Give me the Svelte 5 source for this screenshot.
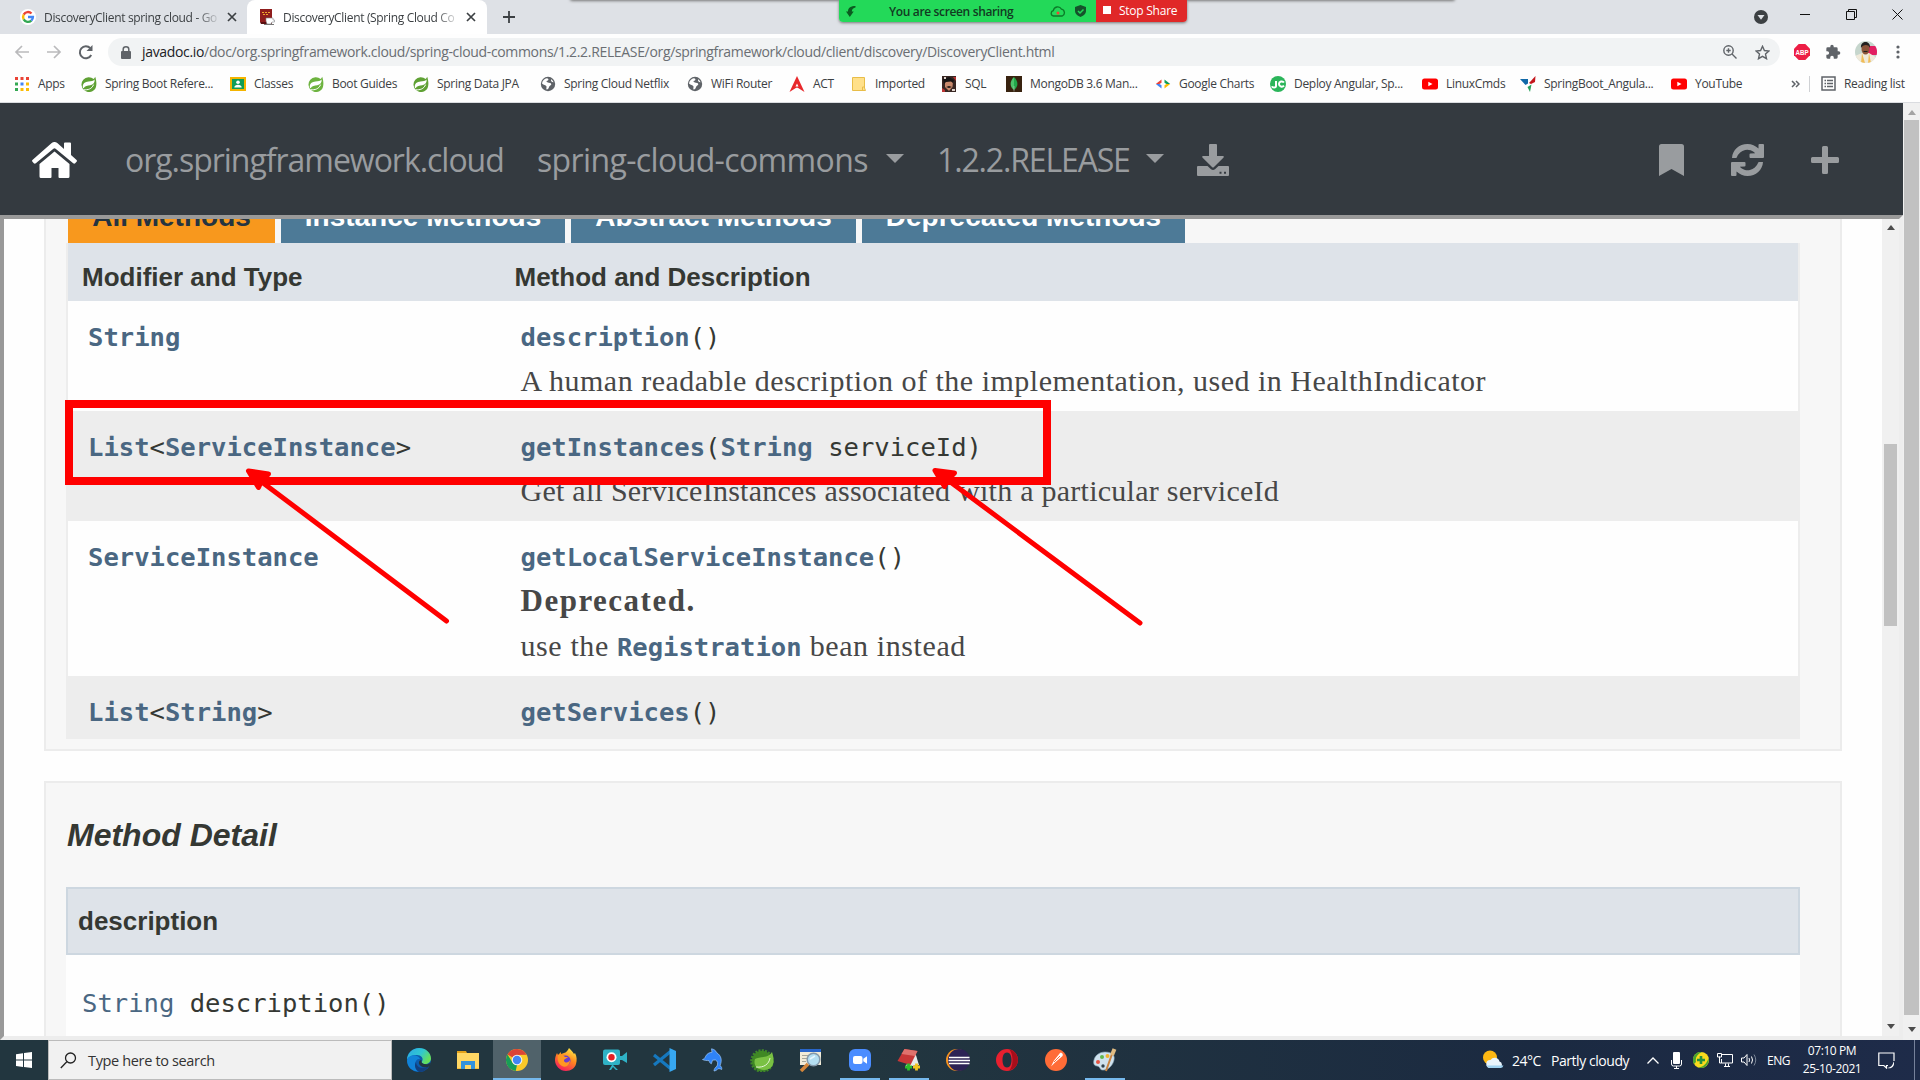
<script>
  // Each bookmark occupies the distance up to the next one's icon.
  const bookmarks = [
    { icon: 'apps', label: 'Apps', width: 67 },
    { icon: 'spring', label: 'Spring Boot Refere...', width: 149 },
    { icon: 'classes', label: 'Classes', width: 78 },
    { icon: 'springlight', label: 'Boot Guides', width: 105 },
    { icon: 'spring', label: 'Spring Data JPA', width: 127 },
    { icon: 'globe', label: 'Spring Cloud Netflix', width: 147 },
    { icon: 'globe', label: 'WiFi Router', width: 102 },
    { icon: 'act', label: 'ACT', width: 62 },
    { icon: 'folder', label: 'Imported', width: 90 },
    { icon: 'sql', label: 'SQL', width: 65 },
    { icon: 'mongo', label: 'MongoDB 3.6 Man...', width: 149 },
    { icon: 'charts', label: 'Google Charts', width: 115 },
    { icon: 'jc', label: 'Deploy Angular, Sp...', width: 152 },
    { icon: 'youtube', label: 'LinuxCmds', width: 98 },
    { icon: 'vee', label: 'SpringBoot_Angula...', width: 151 },
    { icon: 'youtube', label: 'YouTube', width: 116 }
  ];

  const tabs = [
    { label: 'All Methods', width: 207, active: true },
    { label: 'Instance Methods', width: 284 },
    { label: 'Abstract Methods', width: 285 },
    { label: 'Deprecated Methods', width: 323 }
  ];

  const taskApps = [
    { icon: 'edge' },
    { icon: 'explorer' },
    { icon: 'chrome', active: true },
    { icon: 'firefox' },
    { icon: 'camera' },
    { icon: 'vscode' },
    { icon: 'dolphin' },
    { icon: 'sts' },
    { icon: 'finder' },
    { icon: 'zoom', running: true },
    { icon: 'notes', running: true },
    { icon: 'eclipse' },
    { icon: 'opera' },
    { icon: 'postman' },
    { icon: 'paint', running: true }
  ];
</script>

{#snippet bookmarkIcon(name)}
  <svg class="fav" viewBox="0 0 16 16">
    {#if name === 'apps'}
      <path fill="#ea4335" d="M1 1h3v3H1zM6.500 1h3v3h-3zM12 1h3v3h-3z" />
      <path fill="#34a853" d="M1 6.500h3v3H1zM1 12h3v3H1z" />
      <path fill="#4285f4" d="M6.500 6.500h3v3h-3z" />
      <path fill="#fbbc05" d="M12 6.500h3v3h-3zM6.500 12h3v3h-3zM12 12h3v3h-3z" />
    {:else if name === 'spring' || name === 'springlight'}
      <path fill={name === 'spring' ? '#5fa134' : '#6db33f'} d="M14.200.7c-.4 1-.9 1.700-1.500 2.300A7.300 7.300 0 1 0 3 14.100l.3.200A7.300 7.300 0 0 0 15.300 9c.3-2.200-.1-5.100-1.100-8.300z" />
      <path fill="#fff" d="M13.600 3.500c.4 3-1.200 5.200-4.300 5.800C6.500 9.800 4 9.900 2.600 12.200l-.7-.4C1.200 7.500 4.200 5.900 7.500 5.600c2.800-.3 4.700-.6 6.100-2.100z" />
      <path fill="none" stroke="#fff" stroke-width="1" d="M2.800 13.800c4 .2 8-.6 9.800-5.200" />
    {:else if name === 'classes'}
      <path fill="#f4b400" d="M0 1h16v14H0z" />
      <path fill="#0f9d58" d="M2 3h12v10H2z" />
      <circle cx="8" cy="6.300" r="1.800" fill="#fff" />
      <path fill="#fff" d="M4.300 11.500c0-3.600 7.400-3.600 7.400 0z" />
    {:else if name === 'globe'}
      <circle cx="8" cy="8" r="7.200" fill="#5f6368" />
      <path fill="#fff" d="M7 2.300c2 .3 1.800 2.200.4 2.500-1.600.2-1 1.300.5 1.600 1.200.3 3.300.1 3.400 1.800 0 1.300-2 1.300-2.300 2.900-.2 1.400-1.500 2.600-2.300 2.300-.9-.5.2-2.200-.3-3.200C5.700 9 3.700 9.300 2 7.600c.3-3 2.500-5 5-5.300zM11 3.300c1.200.6 2.100 1.700 2.500 3-1.300.2-2.900-.9-2.500-3z" />
    {:else if name === 'act'}
      <path fill="#e8282b" d="M8 0l7.500 16-6.800-4.300h-1.500L.5 16z" />
      <path fill="#fff" d="M8 7.500l1.500 3h-3z" />
    {:else if name === 'folder'}
      <path fill="#ffe08a" stroke="#e8bd48" d="M1.500 1.500h12v10.500l1 2.500h-13z" />
      <path fill="none" stroke="#e8bd48" d="M11.500 14v-3h2" />
    {:else if name === 'sql'}
      <path fill="#382723" d="M1 0h14v16H1z" />
      <path fill="#c98a6d" d="M4 4l4-1 4 2-.5 6L8 15l-4-4z" />
      <path fill="#171414" d="M2 3l6-2 5 3-1 3-2-1.500L5 6 3 8zM5 11l3-1 3 1-3 1z" />
      <path fill="#b33" d="M1 12l3 2v2H1zM12 1h3v4z" />
      <path fill="#e0d4cd" d="M3 1h2v2H3zM11 13h3v2h-3z" />
    {:else if name === 'mongo'}
      <path fill="#38220f" d="M0 0h16v16H0z" />
      <path fill="#21a84a" d="M8 1c5 5 4 10 0 13z" />
      <path fill="#4cc36b" d="M8 1c-5 5-4 10 0 13z" />
      <path stroke="#b9c8b8" stroke-width=".6" d="M8 10v5.500" />
    {:else if name === 'charts'}
      <path fill="#ea4335" d="M6.500 3.500v3.200L4.500 8H.8z" />
      <path fill="#4285f4" d="M.8 8h3.700l2 1.300v3.200z" />
      <path fill="#0f9d58" d="M9.500 3.500L15.200 8h-3.700l-2-1.300z" />
      <path fill="#fbbc05" d="M11.500 8h3.700l-5.700 4.500V9.300z" />
    {:else if name === 'jc'}
      <circle cx="8" cy="8" r="8" fill="#2bb55a" />
      <path fill="none" stroke="#fff" stroke-width="2" d="M6 5v5c0 2-3.500 2-4 .3M14 6.500c-1.500-2-5-1-5 1.600s3.500 3.400 5 1.600" />
    {:else if name === 'youtube'}
      <rect y="2.500" width="16" height="11" rx="2.500" fill="#f00" />
      <path fill="#fff" d="M6.300 5.700v4.600L10.500 8z" />
    {:else if name === 'vee'}
      <path fill="#1169a8" d="M0 3h8v4.500L5.500 9z" />
      <path fill="#c4161c" d="M9 7l6.500-7-.5 6-4 2z" />
      <path fill="#27a05a" d="M7.500 11l4-2.500L10 16z" />
    {/if}
  </svg>
{/snippet}

{#snippet appIcon(name)}
  <svg class="app-icon" viewBox="0 0 24 24">
    {#if name === 'edge'}
      <defs>
        <linearGradient id="edgeTop" x1="0" x2="1" y2=".5"><stop stop-color="#2ba7e6" /><stop offset=".6" stop-color="#31c8d0" /><stop offset="1" stop-color="#65e05c" /></linearGradient>
      </defs>
      <circle cx="12" cy="12" r="12" fill="#0c5cad" />
      <path fill="url(#edgeTop)" d="M0 12C0 5 5.500 0 12 0c7 0 12 5 12 10.500 0 3.500-3 5.500-6 5.500-2 0-4-1-3-2.500C17 10 14 7 10 7 5 7 1 9 0 12z" />
      <path fill="#1183d8" d="M0 12c2-6 11-6 13-1-5-1-7 7-1 12.500C5 23.500 0 19 0 12z" />
      <path fill="#123f7d" d="M9 14c0 5 6 8 13 4-3 5-7 6-10 6-4-2-5-7-3-10z" />
      <path fill="#22363f" d="M14.700 12.500c-1 2 1 3.700 4.300 3.700 2 0 3.500-.6 5-2-.2 1.600-.7 2.900-1.400 4C18 21 11 18 12 14c.4-1.400 1.500-2 2.700-1.500z" />
    {:else if name === 'explorer'}
      <path fill="#e3a21a" d="M1 3h9l1 2H1z" />
      <path fill="#ffd764" d="M1 5h22v16H1z" />
      <path fill="#3192dd" d="M5 13h14v8h-4v-4H9v4H5z" />
      <path fill="#f5bb3c" d="M1 20h4v1H1zM19 20h4v1h-4z" />
    {:else if name === 'chrome'}
      <circle cx="12" cy="12" r="11" fill="#fbc928" />
      <path fill="#dc4437" d="M12 12L2.500 6.500A11 11 0 0 1 21.600 6.700L12 7z" />
      <path fill="#189d58" d="M2.500 6.500l5.100 8.200L12 17l-1.300 6A11 11 0 0 1 2.500 6.500z" />
      <circle cx="12" cy="12" r="5.300" fill="#f1f1f1" />
      <circle cx="12" cy="12" r="4.200" fill="#4285f4" />
    {:else if name === 'firefox'}
      <defs>
        <linearGradient id="fox" x1=".8" y1="0" x2=".3" y2="1"><stop stop-color="#fff04a" /><stop offset=".45" stop-color="#ff8a1e" /><stop offset="1" stop-color="#f5195f" /></linearGradient>
      </defs>
      <path fill="url(#fox)" d="M15 0c3 3 4 4 5 6l1-1c2 4 2 7 1 11-1 4-5 7-10 7C6 23 1 18 1 12c0-3 1-5 2-7l1 2 3-3v2l3-1c2 0 4-3 5-5z" />
      <circle cx="11.500" cy="12.500" r="5" fill="#6b3ccf" />
      <path fill="#ff9722" d="M4 7c2-1 5-1 7 2h3c-1 2-4 1-4 4 2 3 5 1 6-1 0 5-4 8-8 6-4-2-5-7-4-11z" />
    {:else if name === 'camera'}
      <rect y="1.500" width="17" height="15.500" rx="2" fill="#2fb2c6" />
      <path fill="#2fb2c6" d="M16 8h3l5-4v11l-5-3h-3zM10 17l5 5h-2l-3-3-2 3H6l3-5z" />
      <circle cx="8.500" cy="9.200" r="5" fill="#fff" />
      <circle cx="8.500" cy="9.200" r="3.200" fill="#e42025" />
    {:else if name === 'vscode'}
      <path fill="none" stroke="#1678be" stroke-width="3.200" stroke-linejoin="round" d="M18.500 3.500L2 17M2 7l16.500 13.500" />
      <path fill="#37a7f1" d="M17.500 0L24 3v18l-6.500 3z" />
    {:else if name === 'dolphin'}
      <path fill="#2f83f7" stroke="#9cc7f5" stroke-width=".7" stroke-linejoin="round" d="M1.500 11.500c1.500-.5 2.500-1.500 3-3C6 5.500 8.500 4.500 11 4.300L10.500.8c2.500.4 4.300 1.800 5.300 4C20 7.500 21.500 12 19 17.500c1.500 1 2 2.500 1.700 4-1.500-.8-2.500-1-3.700-.7-1 1.200-2.300 2-4 2.200.2-2 1-3.500 3-4.800 1.200-3 .7-5.200-1.500-6.200-1 0-2 0-3 .2l-1.200 3.600c-1.300-.6-2-1.700-2.300-3.300-2.300.2-4.500 0-6.500-1z" />
    {:else if name === 'sts'}
      <circle cx="12" cy="13" r="10.300" fill="#408824" stroke="#3f8928" stroke-width="3" stroke-dasharray="2 1.200" />
      <path fill="#79c143" d="M22 4c4 12 0 18-8 18-7 0-11-5-9-11 4-3 13 0 17-7z" />
      <path fill="none" stroke="#e6f5d9" d="M6 19c8 1 13-3 14-9" />
    {:else if name === 'finder'}
      <path fill="#f1ebd7" d="M1 1h21v16H1z" />
      <path fill="#2966ca" d="M1 1h21v3H1z" />
      <path stroke="#a6a79b" d="M3 7.500h8M3 10.500h5M3 13.500h4" />
      <circle cx="14.500" cy="11.500" r="6.300" fill="#b4dff2" stroke="#8599aa" stroke-width="1.500" />
      <path stroke="#e8f8ff" stroke-width="1.500" d="M11 11l5-3" />
      <path stroke="#d4863a" stroke-width="3.500" d="M9 16l-7 7" />
    {:else if name === 'zoom'}
      <rect x="1" y="1" width="22" height="22" rx="6" fill="#4a8cff" />
      <rect x="5" y="8" width="9.500" height="8" rx="2" fill="#fff" />
      <path fill="#fff" d="M15.300 10.700L19 8.200v7.600l-3.700-2.500z" />
    {:else if name === 'notes'}
      <path fill="#e7e9ea" d="M18 4l4 13-14 2z" />
      <path fill="#c83737" d="M7.500 1l13 2-7 14L.5 13z" />
      <path fill="#e0726d" d="M7.500 1l13 2-2.500 5L4.500 6z" />
      <path stroke="#2dbb2d" stroke-width="2.800" d="M8 19h7M11.500 15.500v7" />
      <path stroke="#f2c41f" stroke-width="2.800" d="M16 19h7M19.500 15.500v7" />
    {:else if name === 'eclipse'}
      <circle cx="11" cy="12" r="11" fill="#f7941e" />
      <circle cx="13" cy="12" r="11" fill="#2c2255" />
      <path stroke="#fff" stroke-width="1.600" d="M3 9.500h20.500M2.500 12.500h21.500M3 15.500h20.500" />
    {:else if name === 'opera'}
      <path fill="#e8202f" fill-rule="evenodd" d="M12 1a11 11 0 1 0 0 22 11 11 0 1 0 0-22zm0 3.500c3 0 4.500 3 4.500 7.500s-1.500 7.500-4.500 7.500S7.500 16.500 7.500 12 9 4.500 12 4.500z" />
      <path fill="#a70e1b" d="M14 1.200A11 11 0 0 1 14 22.800c2-2 3.500-6 3.500-10.800S16 3 14 1.200z" />
    {:else if name === 'postman'}
      <circle cx="12" cy="12" r="11" fill="#ff6c37" />
      <path fill="#fff" d="M16 5c2-1 4 2 2 3.500l-7 6-4 4 3-6z" />
      <path stroke="#ff6c37" d="M10 14l6-6" />
    {:else if name === 'paint'}
      <path fill="#cfe2ee" stroke="#8ca9bb" stroke-width=".6" d="M12 4c8 0 10 4 9 8-1 5-6 11-12 10-2 0-2-4-5-4C1 18 0 15 1 12c1-5 6-8 11-8z" />
      <circle cx="5" cy="14" r="2" fill="#e55443" />
      <circle cx="9" cy="9" r="2" fill="#60b74e" />
      <circle cx="14.500" cy="8" r="2" fill="#f1b22f" />
      <circle cx="10" cy="18" r="1.700" fill="#30424c" />
      <path stroke="#c98443" stroke-width="2" d="M19 6l-6 17" />
      <path stroke="#e0bb82" stroke-width="4" d="M21.500 1L19 7" />
    {/if}
  </svg>
{/snippet}

<div class="screen">
  <header class="tabstrip">
    <div class="tab idle">
      <svg class="fav" viewBox="0 0 16 16">
        <circle cx="8" cy="8" r="8" fill="#fff" />
        <g fill="none" stroke-width="2.400">
          <path stroke="#ea4335" d="M3.700 5.600A4.900 4.900 0 0 1 11.500 4.500" />
          <path stroke="#fbbc05" d="M3.700 5.600a5 5 0 0 0 0 4.800" />
          <path stroke="#34a853" d="M3.700 10.400a4.900 4.900 0 0 0 7.600 1.200" />
          <path stroke="#4285f4" d="M11.300 11.600A4.800 4.800 0 0 0 12.900 8H8" />
        </g>
      </svg>
      <span class="tab-title">DiscoveryClient spring cloud - Go</span>
      <svg class="tab-x" viewBox="0 0 10 10"><path d="M1 1l8 8M9 1L1 9" /></svg>
    </div>
    <div class="tab current">
      <svg class="fav" viewBox="0 0 16 16">
        <path fill="#8f1d1d" d="M1 0h12v13H1z" />
        <path fill="#5a0f10" d="M1 13h12v2H2z" />
        <path stroke="#efa72c" d="M3 3.500h8M4 5.500h6" stroke-dasharray="2 1" />
        <path fill="#fff" stroke="#85888c" stroke-width=".6" d="M7 9h7v2h1.500v2H13l-1 2H8l-1-3z" />
        <path stroke="#777" d="M5 15.500h10" />
      </svg>
      <span class="tab-title">DiscoveryClient (Spring Cloud Co</span>
      <svg class="tab-x" viewBox="0 0 10 10"><path d="M1 1l8 8M9 1L1 9" /></svg>
    </div>
    <svg class="newtab" viewBox="0 0 12 12"><path d="M6 0v12M0 6h12" /></svg>
    <div class="window-controls">
      <svg width="14" height="14" viewBox="0 0 14 14" class="media"><circle cx="7" cy="7" r="7" fill="#3c4043" /><path fill="#dee1e6" d="M3.500 5h7L7 9.800z" /></svg>
      <svg width="10" height="10" viewBox="0 0 10 10"><path d="M0 5.500h10" /></svg>
      <svg width="11" height="11" viewBox="0 0 11 11"><path d="M.5 2.500h8v8h-8zM2.500 2.500v-2h8v8h-2" /></svg>
      <svg class="close" width="11" height="11" viewBox="0 0 11 11"><path d="M.5.5l10 10M10.500.5l-10 10" /></svg>
    </div>
    <div class="hidden-bar"></div>
    <div class="sharing">
      <div class="share-status">
        <svg width="10" height="11" viewBox="0 0 10 11"><path fill="#0b5b20" d="M9.500 0C5 0 2 1.500 2 5.500H0L3.800 11l3.900-5.500H5.800C5.800 3 7.500 2 9.500 1.500z" /></svg>
        <b>You are screen sharing</b>
        <svg class="cloud" width="16" height="11" viewBox="0 0 16 11"><path fill="none" stroke="#0b7a28" stroke-width="1.300" d="M3.500 10A2.700 2.700 0 0 1 3.300 4.700 4.400 4.400 0 0 1 11.500 3.200 3.600 3.600 0 0 1 12.300 10z" /><circle cx="8" cy="7" r="1.500" fill="#f04438" /></svg>
        <svg width="11" height="12" viewBox="0 0 11 12"><path fill="#15522b" d="M5.500 0L11 2v4c0 3-3 5-5.500 6C3 11 0 9 0 6V2z" /><path fill="none" stroke="#23d959" stroke-width="1.500" d="M3 6l2 2 3.500-3.500" /></svg>
      </div>
      <div class="share-stop"><i></i><span>Stop Share</span></div>
    </div>
  </header>

  <div class="toolbar">
    <svg class="nav-icon dim" viewBox="0 0 16 16"><path d="M15 8H2M8 2L2 8l6 6" /></svg>
    <svg class="nav-icon dim" viewBox="0 0 16 16"><path d="M1 8h13M8 2l6 6-6 6" /></svg>
    <svg class="nav-icon" viewBox="0 0 16 16"><path d="M13.200 11A6 6 0 1 1 12.300 4.200" /><path class="solid" d="M14.500 1v6H8.500z" /></svg>
    <div class="omnibox">
      <svg width="10" height="13" viewBox="0 0 10 13"><rect y="5" width="10" height="8" rx="1" fill="#5f6368" /><path fill="none" stroke="#5f6368" stroke-width="1.500" d="M2.200 5V3.300a2.800 2.500 0 0 1 5.600 0V5" /></svg>
      <span class="url"><em>javadoc.io</em>/doc/org.springframework.cloud/spring-cloud-commons/1.2.2.RELEASE/org/springframework/cloud/client/discovery/DiscoveryClient.html</span>
      <svg class="magnify" width="14" height="14" viewBox="0 0 14 14"><g fill="none" stroke="#5f6368" stroke-width="1.400"><circle cx="5.500" cy="5.500" r="4.700" /><path d="M9 9l4.500 4.500M3.300 5.500h4.400M5.500 3.300v4.400" /></g></svg>
      <svg width="15" height="15" viewBox="0 0 15 15"><path fill="none" stroke="#5f6368" stroke-width="1.400" d="M7.500 1.300l1.900 4.200 4.500.5-3.400 3.100 1 4.600-4-2.400-4 2.400 1-4.600L1.100 6l4.500-.5z" /></svg>
    </div>
    <div class="extensions">
      <svg class="abp" width="16" height="16" viewBox="0 0 16 16"><path fill="#ed1e45" d="M4.700 0h6.600L16 4.700v6.600L11.300 16H4.700L0 11.300V4.700z" /><text x="8" y="10.700" textLength="13" lengthAdjust="spacingAndGlyphs">ABP</text></svg>
      <svg width="16" height="16" viewBox="0 0 24 24"><path fill="#5f6368" d="M20.500 11H19V7a2 2 0 0 0-2-2h-4V3.500a2.500 2.500 0 0 0-5 0V5H4a2 2 0 0 0-2 2v3.800h1.500a2.700 2.700 0 0 1 0 5.400H2V20a2 2 0 0 0 2 2h3.800v-1.500a2.700 2.700 0 0 1 5.400 0V22H17a2 2 0 0 0 2-2v-4h1.500a2.500 2.500 0 0 0 0-5z" /></svg>
      <svg class="avatar" viewBox="0 0 22 22"><path fill="#c6d6cd" d="M0 0h22v22H0z" /><path fill="#e21f62" d="M13 5h9v9h-9z" /><path fill="#f0eadb" d="M0 15l7-3h7l8 5v5H0z" /><path fill="#f1bd58" d="M7 12l3 10H6zM14 12l2 10h-3z" /><ellipse cx="10.500" cy="8" rx="4" ry="5.500" fill="#8b5438" /><path fill="#22201f" d="M6 7c-1-8 10-8 9 0-1-4-7-4-9 0zM8.500 10h4v1h-4z" /></svg>
      <svg class="more" width="4" height="14" viewBox="0 0 4 14"><g fill="#5f6368"><circle cx="2" cy="2" r="1.600" /><circle cx="2" cy="7" r="1.600" /><circle cx="2" cy="12" r="1.600" /></g></svg>
    </div>
  </div>

  <nav class="bookmarks">
    {#each bookmarks as item}
      <div class="bookmark" style:width="{item.width}px">
        {@render bookmarkIcon(item.icon)}
        <span>{item.label}</span>
      </div>
    {/each}
    <div class="reading">
      <svg width="9" height="8" viewBox="0 0 9 8"><path fill="none" stroke="#5f6368" stroke-width="1.500" d="M1 1l3 3-3 3M5 1l3 3-3 3" /></svg>
      <i></i>
      <svg width="15" height="15" viewBox="0 0 15 15"><path fill="none" stroke="#5f6368" stroke-width="1.500" d="M1 1h13v13H1zM3.500 4.500H5M6 4.500h6M3.500 7.500H5M6 7.500h6M3.500 10.500H5M6 10.500h6" /></svg>
      <span>Reading list</span>
    </div>
  </nav>

  <main class="page">
    <div class="content">
      <div class="navbar">
        <svg class="home" viewBox="0 0 45 36"><path fill="#fff" d="M22.500 0c1 0 2 .4 2.800 1.100L32 7V1.500Q32 .5 33 .5h5q1 0 1 1V13l5.300 4.800q1.200 1 .2 2l-1.300 1.400q-1 .9-2 0L23.600 6.700q-1.100-1-2.200 0L3.800 21.200q-1 .9-2 0L.5 19.800q-1-1.100.2-2L19.700 1.100A4 4 0 0 1 22.500 0z" /><path fill="#fff" d="M22.500 9.500L37.500 22v12.500q0 1.500-1.500 1.500h-8.500q-1 0-1-1v-9h-7v9q0 1-1 1H9q-1.500 0-1.500-1.500V22z" /></svg>
        <span class="crumb group">org.springframework.cloud</span>
        <span class="crumb artifact">spring-cloud-commons</span>
        <svg class="caret" viewBox="0 0 18 9"><path d="M0 0h18L9 9z" /></svg>
        <span class="crumb release">1.2.2.RELEASE</span>
        <svg class="caret" viewBox="0 0 18 9"><path d="M0 0h18L9 9z" /></svg>
        <svg class="nav-glyph download" width="32" height="32" viewBox="0 0 32 32"><path d="M13 0h6q1 0 1 1v11h6q1.500.4.600 1.500L17 23q-1 1-2 0L5.400 13.500Q4.500 12.400 6 12h6V1q0-1 1-1z" /><path fill-rule="evenodd" d="M1 22h9.500l3.500 3.300q2 1.600 4 0l3.500-3.300H31q1 0 1 1v8q0 1-1 1H1q-1 0-1-1v-8q0-1 1-1zm21.500 5.800v2h2v-2zm4.500 0v2h2v-2z" /></svg>
        <div class="nav-actions">
          <svg class="nav-glyph" width="25" height="32" viewBox="0 0 25 32"><path d="M2.500 0h20Q25 0 25 2.500V32l-12.500-7L0 32V2.500Q0 0 2.500 0z" /></svg>
          <svg class="nav-glyph" width="33" height="32" viewBox="0 0 33 32"><path d="M1 14C1.500 6 8 0 16.500 0c4.300 0 8 1.800 11 4.500V1q0-1 1-1H32q1 0 1 1v12q0 1-1 1H19.500q-1 0-1-1v-2.500q0-1 1-1l4.800-.2A11 11 0 0 0 6 13q-.3 1-1 1zM32 18c-.5 8-7 14-15.500 14-4.300 0-8-1.800-11-4.500V31q0 1-1 1H1q-1 0-1-1V19q0-1 1-1h12.500q1 0 1 1v2.500q0 1-1 1l-4.800.2A11 11 0 0 0 27 19q.3-1 1-1z" /></svg>
          <svg class="nav-glyph" width="28" height="28" viewBox="0 0 28 28"><path d="M12.500 0h3q1.500 0 1.500 1.500V11h9.500q1.500 0 1.500 1.500v3q0 1.500-1.500 1.500H17v9.500q0 1.500-1.500 1.500h-3q-1.500 0-1.500-1.500V17H1.500Q0 17 0 15.500v-3Q0 11 1.500 11H11V1.500Q11 0 12.500 0z" /></svg>
        </div>
      </div>

      <div class="frame">
        <div class="doc">
          <section class="panel summary">
            <div class="method-tabs">
              {#each tabs as tab}
                <div class="method-tab" class:selected={tab.active} style:width="{tab.width}px">{tab.label}</div>
              {/each}
            </div>
            <div class="methods">
              <div class="method-row head"><div>Modifier and Type</div><div>Method and Description</div></div>
              <div class="method-row">
                <div><code><b>String</b></code></div>
                <div>
                  <code><b>description</b>()</code>
                  <p class="human">A human readable description of the implementation, used in HealthIndicator</p>
                </div>
              </div>
              <div class="method-row alt">
                <div><code><b>List</b>&lt;<b>ServiceInstance</b>&gt;</code></div>
                <div>
                  <code><b>getInstances</b>(<b>String</b> serviceId)</code>
                  <p>Get all ServiceInstances associated with a particular serviceId</p>
                </div>
              </div>
              <div class="method-row tall">
                <div><code><b>ServiceInstance</b></code></div>
                <div>
                  <code><b>getLocalServiceInstance</b>()</code>
                  <p class="deprecated">Deprecated.</p>
                  <p class="advice">use the <code><b>Registration</b></code> bean instead</p>
                </div>
              </div>
              <div class="method-row alt last">
                <div><code><b>List</b>&lt;<b>String</b>&gt;</code></div>
                <div><code><b>getServices</b>()</code></div>
              </div>
            </div>
          </section>
          <section class="panel detail">
            <h3>Method Detail</h3>
            <h4>description</h4>
            <div class="signature"><code><span>String</span> description()</code></div>
          </section>
        </div>
        <div class="scroll inner">
          <svg viewBox="0 0 8 5"><path d="M0 5h8L4 0z" /></svg>
          <i></i>
          <svg class="down" viewBox="0 0 8 5"><path d="M0 0h8L4 5z" /></svg>
        </div>
      </div>
    </div>
    <div class="scroll outer">
      <svg class="faint" viewBox="0 0 8 5"><path d="M0 5h8L4 0z" /></svg>
      <i></i>
      <svg viewBox="0 0 8 5"><path d="M0 0h8L4 5z" /></svg>
    </div>
  </main>

  <footer class="taskbar">
    <div class="start"><svg width="16" height="16" viewBox="0 0 16 16"><path fill="#fff" d="M0 2.200L7 1.200v6.400H0zM8 1l8-1v7.600H8zM0 8.500h7v6.400l-7-1zM8 8.500h8V16l-8-1z" /></svg></div>
    <div class="search">
      <svg width="17" height="17" viewBox="0 0 17 17"><g fill="none" stroke="#222" stroke-width="1.300"><circle cx="10.500" cy="6" r="5" /><path d="M6.800 9.700L.8 16" /></g></svg>
      <span>Type here to search</span>
    </div>
    <div class="apps">
      {#each taskApps as app}
        <div class="app" class:active={app.active} class:running={app.running}>{@render appIcon(app.icon)}</div>
      {/each}
    </div>
    <div class="tray">
      <svg class="weather" width="22" height="20" viewBox="0 0 22 20"><circle cx="8" cy="7.500" r="7" fill="#fdb813" /><path fill="#e9f4fc" d="M8 18a4 4 0 0 1 .5-8 5 5 0 0 1 9 1.500A3.500 3.500 0 0 1 18 18z" /><path fill="#9fd2f0" d="M8 18a4 4 0 0 1-3.500-2.500h17A3.500 3.500 0 0 1 18 18z" /></svg>
      <span class="temp">24°C</span>
      <span class="sky">Partly cloudy</span>
      <svg class="chev" width="12" height="7" viewBox="0 0 12 7"><path fill="none" stroke="#fff" stroke-width="1.300" d="M.5 6.500L6 1l5.500 5.500" /></svg>
      <svg class="mic" width="11" height="17" viewBox="0 0 11 17"><rect x="2" width="7" height="12" rx="1" fill="#fff" /><path fill="none" stroke="#fff" d="M.5 8v4q0 2 2 2h6q2 0 2-2V8M5.500 14v2.500M3 16.500h5" /></svg>
      <svg class="shield" width="16" height="16" viewBox="0 0 16 16"><circle cx="8" cy="8" r="8" fill="#fada1d" /><path fill="#4aa32f" d="M1 12A8 8 0 0 1 9 0C4 2 2 6 3 10zM15.500 6A8 8 0 0 1 5 15.500c5 0 9-4 10.500-9.500z" /><path stroke="#27903c" stroke-width="2.600" d="M4 8h8M8 4v8" /></svg>
      <svg class="net" width="16" height="14" viewBox="0 0 16 14"><path fill="none" stroke="#fff" d="M5 1.500h10.500v8.500H4.500V6M7 13.500h6M8.500 10.500v3M11.500 10.500v3M.5.500h4v3.500h-4zM2.500 3.500v6.500h2" /></svg>
      <svg class="speaker" width="16" height="14" viewBox="0 0 16 14"><path fill="none" stroke="#fff" d="M.5 5h2.500l3-3.500v11L3 9H.5zM8 5q1 2 0 4M10.500 3.500q2 3.500 0 7" /><path fill="none" stroke="#7b8798" d="M13 1.500q3.500 5.500 0 11" /></svg>
      <span class="lang">ENG</span>
      <div class="clock"><span>07:10 PM</span><span>25-10-2021</span></div>
      <svg class="notice" width="17" height="17" viewBox="0 0 17 17"><path fill="none" stroke="#fff" stroke-width="1.200" d="M16 9V1H.8v12.500h5l2.700 2.500v-2.500h1.500" /><path fill="#fff" d="M15.500 9.500c2 4-2 8-6 6.500 3.500-.5 5.500-3 6-6.500z" /></svg>
      <i></i>
    </div>
  </footer>

  <svg class="markup" viewBox="0 0 1920 1080">
    <rect x="69" y="404" width="978" height="77" fill="none" stroke="#f00" stroke-width="8" />
    <g stroke="#f00" stroke-width="5" stroke-linecap="round" stroke-linejoin="round" fill="#f00">
      <path d="M446.500 621L250 473M248.500 471L268.500 474l-7 7-3 6.500z" />
      <path d="M1140 623L937 472M935 470.500L954.500 473l-7 7-3 6.500z" />
    </g>
  </svg>
</div>

<style>
  :global(body) { margin: 0; overflow: hidden; }
  * { box-sizing: border-box; }
  .screen {
    position: relative;
    width: 1920px;
    height: 1080px;
    display: flex;
    flex-direction: column;
    overflow: hidden;
    background: #fefefe;
    font-family: "Open Sans", "Noto Sans", sans-serif;
    font-size: 12px;
    color: #3c4043;
  }
  svg { flex: none; display: block; }
  .fav { width: 16px; height: 16px; }

  /* Tab strip */
  .tabstrip { position: relative; display: flex; align-items: center; height: 34px; background: #dee1e6; flex: none; }
  .tab { display: flex; align-items: center; height: 34px; white-space: nowrap; }
  .tab.idle { width: 247px; padding-left: 20px; }
  .tab.current { width: 240px; padding-left: 12px; background: #fff; border-radius: 8px 8px 0 0; }
  .tab-title {
    width: 177px;
    margin-left: 8px;
    overflow: hidden;
    letter-spacing: -0.33px;
    -webkit-mask-image: linear-gradient(90deg, #000 86%, transparent);
    mask-image: linear-gradient(90deg, #000 86%, transparent);
  }
  .tab-x { width: 10px; height: 10px; margin-left: 6px; }
  .tab-x path { stroke: #3c4043; stroke-width: 1.7; }
  .newtab { width: 12px; height: 12px; margin-left: 16px; }
  .newtab path { stroke: #3c4043; stroke-width: 1.8; }
  .window-controls { display: flex; align-items: center; height: 28px; margin: 0 17px 6px auto; gap: 36px; }
  .window-controls path { fill: none; stroke: #111; }
  .window-controls .media { margin: 6px -4px 0 0; }
  .window-controls .media path { fill: #dee1e6; stroke: none; }
  .window-controls .close { margin-left: -1px; }
  .hidden-bar { position: absolute; top: -4px; left: 570px; width: 885px; height: 4px; border-radius: 4px; box-shadow: 0 1px 3px #777; }
  .sharing { position: absolute; left: 839px; top: 0; display: flex; height: 22px; border-radius: 0 0 4px 4px; box-shadow: 0 1px 3px #777; }
  .share-status { display: flex; align-items: center; width: 257px; padding-left: 7px; background: #23d959; border-radius: 0 0 0 4px; color: #123a22; }
  .share-status b { width: 126px; margin-left: 33px; font-weight: 600; letter-spacing: -0.35px; white-space: nowrap; }
  .cloud { margin: 0 9px 0 35px; }
  .share-stop { display: flex; align-items: center; width: 91px; padding: 0 0 2px 7px; background: #e02828; border-radius: 0 0 4px 0; color: #fff; white-space: nowrap; }
  .share-stop i { width: 8px; height: 8px; margin-right: 8px; background: #fff; }
  .share-stop span { letter-spacing: -0.25px; }

  /* Address bar */
  .toolbar { display: flex; align-items: center; height: 36px; padding-left: 14px; flex: none; }
  .nav-icon { width: 16px; height: 16px; margin-right: 16px; }
  .nav-icon path { fill: none; stroke: #5f6368; stroke-width: 2; }
  .nav-icon .solid { fill: #5f6368; stroke: none; }
  .nav-icon.dim path { stroke: #bababc; stroke-width: 1.7; }
  .omnibox { display: flex; align-items: center; width: 1672px; height: 28px; margin-left: -2px; padding: 0 10px 0 13px; border-radius: 14px; background: #f1f3f4; }
  .url { margin-left: 11px; padding-bottom: 2px; font-size: 14px; letter-spacing: -0.335px; color: #6a6e73; white-space: nowrap; }
  .url em { font-style: normal; color: #202124; }
  .magnify { margin: 0 18px 0 auto; }
  .extensions { display: flex; align-items: center; margin-left: 14px; gap: 15px; }
  .abp text { fill: #fff; font: 700 7.5px "Liberation Sans", sans-serif; text-anchor: middle; }
  .avatar { width: 22px; height: 22px; margin-left: -1px; border-radius: 50%; }
  .more { margin-left: 4px; }

  /* Bookmarks */
  .bookmarks { display: flex; align-items: center; height: 33px; padding: 0 0 5px 14px; border-bottom: 1px solid #dadce0; flex: none; }
  .bookmark { display: flex; align-items: center; gap: 8px; white-space: nowrap; letter-spacing: -0.3px; flex: none; }
  .reading { display: flex; align-items: center; margin-left: 4px; white-space: nowrap; letter-spacing: -0.3px; }
  .reading i { width: 1px; height: 16px; margin: 0 11px 0 9px; background: #cfd1d4; }
  .reading span { margin-left: 8px; }

  /* Page */
  .page { display: flex; height: 937px; flex: none; }
  .content { width: 1903px; display: flex; flex-direction: column; }
  .navbar { display: flex; align-items: center; height: 112px; padding: 2px 64px 0 32px; background: #343a40; flex: none; }
  .home { width: 45px; height: 36px; }
  .crumb { font-size: 32px; line-height: 44px; color: #999c9f; white-space: nowrap; flex: none; }
  .group { width: 379px; margin-left: 48px; letter-spacing: -1.03px; }
  .artifact { width: 331px; margin-left: 33px; letter-spacing: -0.63px; }
  .release { width: 190px; margin-left: 33px; letter-spacing: -1.15px; }
  .caret { width: 18px; height: 9px; margin: 0 0 4px 18px; fill: #999c9f; }
  .release + .caret { margin-left: 19px; }
  .nav-glyph { fill: #999c9f; }
  .download { margin-left: 33px; }
  .nav-actions { display: flex; align-items: center; gap: 47px; margin-left: auto; }

  .frame { display: flex; height: 825px; border: 4px solid; border-color: #999 #ededed #ededed #999; overflow: hidden; }
  .doc { width: 1878px; padding: 0 40px; overflow: hidden; }
  .panel { width: 1798px; background: #f7f7f7; border: 2px solid #ececec; padding: 0 40px 0 20px; }
  .summary { height: 532px; border-top: 0; }
  .method-tabs { display: flex; gap: 6px; height: 24px; padding-left: 2px; overflow: hidden; }
  .method-tab { background: #4d7a97; color: #fff; font: 700 28px/32px "Liberation Sans", Arial, sans-serif; text-align: center; white-space: nowrap; height: 50px; margin-top: -18px; flex: none; }
  .method-tab.selected { background: #f8981d; color: #253441; }
  .methods { width: 1734px; height: 496px; border: 2px solid #ededed; border-width: 0 2px; background: #fefefe; }
  .method-row { display: grid; grid-template-columns: 432.5px 1fr; height: 110px; padding: 14px 0 0 20px; }
  .method-row.tall { height: 155px; }
  .method-row.alt { background: #ededed; }
  .method-row.last { height: 63px; }
  .method-row.head { height: 58px; padding: 18px 0 0 14px; background: #dee3e9; color: #353833; font: 700 26px/32px "Liberation Sans", Arial, sans-serif; }
  code { font-family: "DejaVu Sans Mono", "Liberation Mono", monospace; font-size: 25.55px; color: #353833; white-space: pre; }
  .method-row code { display: block; height: 45px; line-height: 45px; }
  code b { color: #4a6782; }
  p { height: 45px; margin: 0; color: #474747; font: 30px/41px "Liberation Serif", Georgia, serif; white-space: nowrap; letter-spacing: 0.26px; }
  .method-row p code { display: inline; line-height: 41px; letter-spacing: 0; }
  .human { letter-spacing: 0.5px; }
  .deprecated { font-size: 31px; font-weight: 700; letter-spacing: 1.5px; }
  .advice { letter-spacing: 0.6px; }

  .detail { height: 280px; margin-top: 30px; }
  h3 { margin: 0; padding: 33px 0 0 1px; height: 104px; color: #353833; font: italic 700 32px/38px "Liberation Sans", Arial, sans-serif; }
  h4 { width: 1734px; height: 68px; margin: 0; padding: 16px 10px; background: #dee3e9; border: 2px solid #cdd7e0; color: #353833; font: 700 26px/32px "Liberation Sans", Arial, sans-serif; }
  .signature { width: 1734px; height: 100px; padding: 26px 16px; background: #fefefe; line-height: 45px; }
  .signature span { color: #4a6782; }

  .scroll { display: flex; flex-direction: column; align-items: center; width: 17px; background: #f0f0f0; fill: #4c4c4c; }
  .scroll svg { width: 8px; height: 5px; }
  .scroll i { background: #c1c1c1; width: 13px; }
  .inner { padding: 6px 0 7px; }
  .inner i { height: 182px; margin-top: 214px; }
  .inner .down { margin-top: auto; }
  .outer { padding: 7px 0; }
  .outer i { width: 15px; height: 895px; margin: 5px 0 12px; }
  .faint { fill: #a3a3a3; }

  /* Taskbar */
  .taskbar { display: flex; height: 40px; background: linear-gradient(90deg, #22363f 45%, #1b2a41 80%, #1e2b49); color: #fff; flex: none; }
  .start { display: grid; place-items: center; width: 48px; }
  .search { display: flex; align-items: center; width: 344px; padding-left: 11px; background: #f1f1f1; border: 1px solid #bbb; color: #333; }
  .search span { margin-left: 11px; font-size: 14.5px; letter-spacing: -0.35px; }
  .apps { display: flex; gap: 1px; margin-left: 3px; }
  .app { position: relative; display: grid; place-items: center; width: 48px; }
  .app-icon { width: 24px; height: 24px; }
  .app.active { background: #50626a; border-bottom: 2px solid #76b9ed; padding-top: 2px; }
  .app.running::after { content: ""; position: absolute; left: 4px; right: 4px; bottom: 0; height: 2px; background: #76b9ed; }
  .tray { display: flex; align-items: center; flex: 1; padding-left: 353px; white-space: nowrap; }
  .temp { width: 31px; margin-left: 8px; font-size: 14px; letter-spacing: -0.5px; }
  .sky { width: 80px; margin-left: 8px; font-size: 14px; letter-spacing: -0.45px; }
  .chev { margin-left: 16px; }
  .mic { margin-left: 12px; }
  .shield { margin-left: 11px; }
  .net { margin-left: 8px; }
  .speaker { margin-left: 8px; }
  .lang { width: 24px; margin-left: 10px; letter-spacing: -0.5px; }
  .clock { display: flex; flex-direction: column; align-items: center; width: 60px; margin-left: 11px; line-height: 18px; letter-spacing: -0.4px; }
  .notice { margin-left: 16px; }
  .tray i { width: 1px; height: 40px; margin-left: 19px; background: #76819a; }

  /* Hand-drawn highlights laid over the page */
  .markup { position: absolute; inset: 0; width: 1920px; height: 1080px; pointer-events: none; }
</style>
